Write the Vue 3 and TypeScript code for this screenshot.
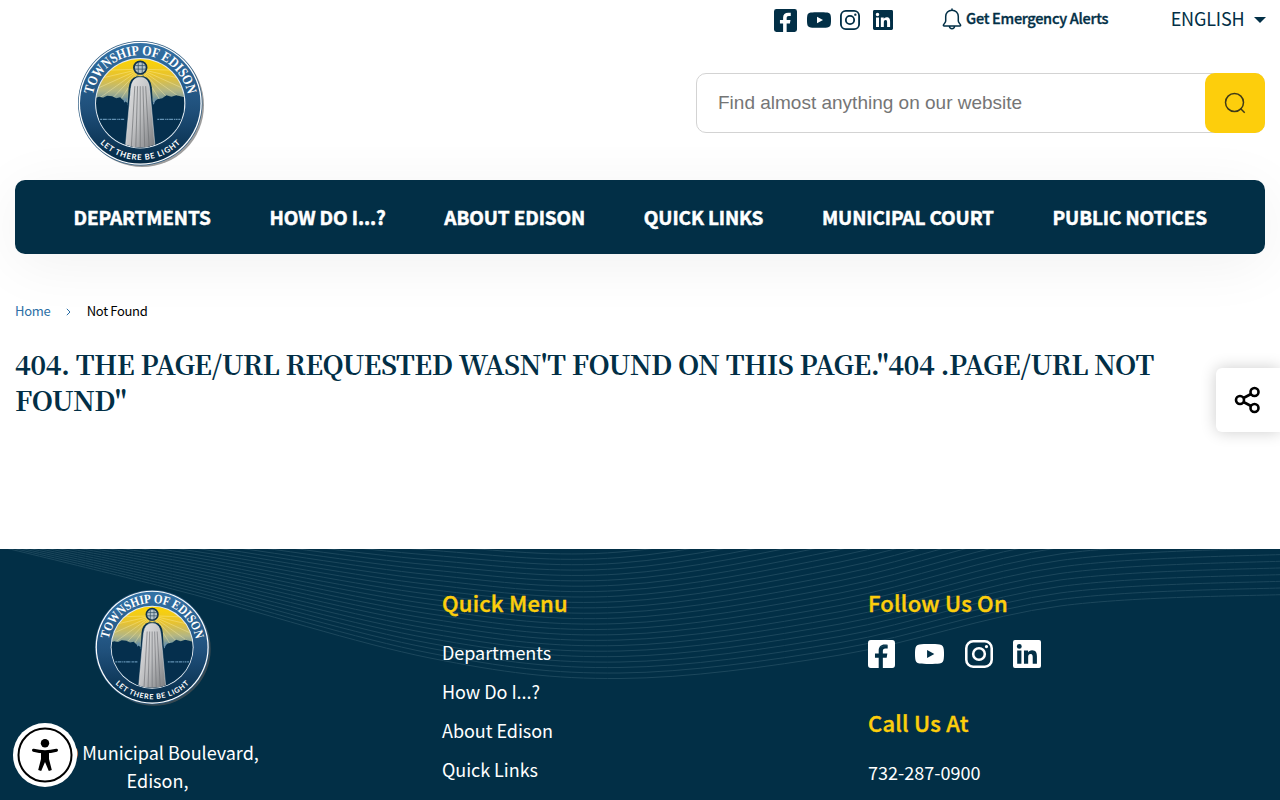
<script setup lang="ts">
const nav = ['DEPARTMENTS', 'HOW DO I...?', 'ABOUT EDISON', 'QUICK LINKS', 'MUNICIPAL COURT', 'PUBLIC NOTICES']
const quick = ['Departments', 'How Do I...?', 'About Edison', 'Quick Links']

const icons = [
  { name: 'facebook', d: 'M2.500 0h19a2.500 2.500 0 0 1 2.500 2.500v19a2.500 2.500 0 0 1-2.500 2.500h-8.300v-8.800h3.400l.6-3.600h-4V9.400c0-1.300.6-2.200 2.200-2.200h2.100V4c-.8-.1-1.800-.2-2.700-.2-3.300 0-5.300 1.900-5.300 5.200v2.600H6.200v3.600h3.300V24H2.500A2.500 2.500 0 0 1 0 21.500v-19A2.500 2.500 0 0 1 2.500 0z' },
  { name: 'youtube', d: 'M12 3.500c-3 0-6.500.1-8.300.4C1.300 4.300.4 5.800.2 8c-.3 2.600-.3 5.400 0 8 .2 2.200 1.100 3.700 3.500 4.100 3.600.5 13 .5 16.600 0 2.400-.4 3.300-1.900 3.500-4.100.3-2.600.3-5.400 0-8-.2-2.200-1.100-3.700-3.500-4.100-1.800-.3-5.300-.4-8.300-.4zM10 8.500l6 3.500-6 3.500z' },
  { name: 'instagram', d: 'M7 0h10a7 7 0 0 1 7 7v10a7 7 0 0 1-7 7H7a7 7 0 0 1-7-7V7a7 7 0 0 1 7-7zm0 2.200A4.800 4.800 0 0 0 2.200 7v10A4.800 4.800 0 0 0 7 21.800h10a4.800 4.800 0 0 0 4.800-4.800V7A4.800 4.800 0 0 0 17 2.200zM12 5.900a6.100 6.100 0 1 1 0 12.200 6.100 6.100 0 0 1 0-12.200zm0 2.200a3.900 3.900 0 1 0 0 7.800 3.900 3.900 0 0 0 0-7.800zM18.400 4.200a1.400 1.400 0 1 1 0 2.800 1.400 1.400 0 0 1 0-2.800z' },
  { name: 'linkedin', d: 'M1.700 0h20.600A1.700 1.700 0 0 1 24 1.700v20.600a1.700 1.700 0 0 1-1.700 1.700H1.700A1.700 1.700 0 0 1 0 22.300V1.700A1.700 1.700 0 0 1 1.700 0zM3.600 9.100v11.300h3.600V9.100zM5.400 3.400a2.100 2.100 0 1 0 0 4.200 2.100 2.100 0 0 0 0-4.200zM9.400 9.100v11.300H13v-5.600c0-1.500.3-2.900 2.100-2.900s1.800 1.700 1.800 3v5.500h3.600v-6.200c0-3-.7-5.400-4.200-5.400-1.700 0-2.800.9-3.300 1.800h-.1V9.100z' },
]

// Contour lines fan out from the left edge; each row is [x, y of lowest line, line spacing]
const knots = [[-40, 537, 1.2], [180, 591, 3], [430, 658, 4.900], [620, 678.500, 5.500], [840, 655, 6.200], [1060, 606, 6.500], [1300, 594, 6.700]]
const waves = Array.from({ length: 27 }, (_, i) => {
  const p = knots.map(([x, y, s]) => [x, y - i * s])
  let d = `M${p[0][0]} ${p[0][1]}`
  for (let k = 0; k < p.length - 1; k++) {
    const a = p[Math.max(k - 1, 0)], b = p[k], c = p[k + 1], e = p[Math.min(k + 2, p.length - 1)]
    d += `C${b[0] + (c[0] - a[0]) / 6} ${b[1] + (c[1] - a[1]) / 6} ${c[0] - (e[0] - b[0]) / 6} ${c[1] - (e[1] - b[1]) / 6} ${c[0]} ${c[1]}`
  }
  return d
})

const rays = Array.from({ length: 17 }, (_, i) => {
  const a = (i * 11.25 * Math.PI) / 180
  return { x: 62 - 60 * Math.cos(a), y: 30 + 60 * Math.sin(a) }
})
const folds = [-9, -4.5, 0, 4.5, 9]
</script>

<template>
  <svg class="defs" width="0" height="0">
    <defs>
      <linearGradient id="ring" x1="0" y1="0" x2="0" y2="1">
        <stop offset="0" stop-color="#3372a6" /><stop offset=".55" stop-color="#1f4f7a" /><stop offset="1" stop-color="#042a45" />
      </linearGradient>
      <linearGradient id="sky" x1="0" y1="0" x2="0" y2="1">
        <stop offset="0" stop-color="#fdd400" /><stop offset=".2" stop-color="#e6c233" /><stop offset=".36" stop-color="#b3b685" /><stop offset=".5" stop-color="#5c8aa8" />
      </linearGradient>
      <linearGradient id="robe" x1="0" y1="0" x2="1" y2="1">
        <stop offset="0" stop-color="#e6e6e7" /><stop offset=".5" stop-color="#c0c1c3" /><stop offset="1" stop-color="#77797c" />
      </linearGradient>
      <clipPath id="disc"><circle cx="62" cy="62" r="44" /></clipPath>
      <path id="arc-full" d="M62 110A48 48 0 1 1 62.100 110" />
      <path id="arc-low" d="M5.500 62a56.500 56.500 0 0 0 113 0" />
      <symbol id="seal" viewBox="0 0 128 128">
        <circle cx="64" cy="64" r="61.500" fill="#5b5b5b" opacity=".6" />
        <circle cx="62" cy="62" r="62" fill="#2b5a80" />
        <circle cx="62" cy="62" r="61.300" fill="#fff" />
        <circle cx="62" cy="62" r="60" fill="url(#ring)" />
        <circle cx="62" cy="62" r="45" fill="#e6edf2" />
        <g clip-path="url(#disc)">
          <rect x="18" y="18" width="88" height="88" fill="url(#sky)" />
          <path v-for="(r, i) in rays" :key="i" :d="`M62 28L${r.x} ${r.y}`" stroke="#fff0a8" stroke-width=".8" opacity=".5" />
          <path d="M16 57l5-1.500 4 1 4-2 5 .5 4 2 4-1 3 3 5 3h24l5-4 5-1 4-3 5 1.500 5-1.500 8 2v60H16z" fill="#052f4d" />
          <path d="M50 64l0-6M46 61l2-4M75 63l2-6M72 61v-5" stroke="#6d94b0" stroke-width="1.200" />
          <path d="M46 120L50.500 46q1-9 8-11h7q7 2 8 11l5 74z" fill="#052f4d" />
          <path d="M47 108L52.500 48q1-12 9.500-12t9.500 12l5.500 60z" fill="url(#robe)" stroke="#ececec" stroke-width=".5" />
          <path v-for="f in folds" :key="f" :d="`M${62 + f * 0.6} 45L${62 + f} 108`" stroke="#707276" stroke-width=".7" />
        </g>
        <circle cx="62" cy="26.500" r="6.300" fill="#b6c4c9" stroke="#12324a" stroke-width="1.800" />
        <path d="M56.500 24.500h11M56 28h12M60 21v11M64 21v11M58.500 34q3.500-2 7 0" stroke="#38566b" stroke-width=".8" fill="none" />
        <path d="M22 78h24M79 78h23" stroke="#6392b4" stroke-width="1.200" stroke-dasharray="2 .7 4 .8 1 .6" />
        <text class="seal-top"><textPath href="#arc-full" startOffset="50%" text-anchor="middle" textLength="133" lengthAdjust="spacingAndGlyphs">TOWNSHIP OF EDISON</textPath></text>
        <text class="seal-low"><textPath href="#arc-low" startOffset="50%" text-anchor="middle" textLength="89">LET THERE BE LIGHT</textPath></text>
      </symbol>
    </defs>
  </svg>

  <div class="page">
    <header class="header">
      <div class="brand"><svg class="seal" viewBox="0 0 128 128"><use href="#seal" /></svg></div>
      <div class="tools">
        <div class="topbar">
          <div class="social">
            <svg v-for="ic in icons" :key="ic.name" :class="ic.name" viewBox="0 0 24 24" preserveAspectRatio="none"><path fill-rule="evenodd" :d="ic.d" /></svg>
          </div>
          <a class="alerts">
            <svg viewBox="0 0 20 22" fill="none" stroke="#022f46" stroke-width="1.500" stroke-linecap="round" stroke-linejoin="round">
              <path d="M10 2.200V1M3.700 13V8.600C3.700 5 6.300 2.200 10 2.200s6.300 2.800 6.300 6.400V13c0 1.300 1 2 2.200 3.800.3.600 0 1.100-.6 1.100H2.100c-.6 0-.9-.5-.6-1.100C2.700 15 3.700 14.300 3.700 13zM7.300 18c.2 1.600 1.200 2.700 2.700 2.700s2.500-1.100 2.700-2.700" />
            </svg>
            <span>Get Emergency Alerts</span>
          </a>
          <a class="lang"><span>ENGLISH</span><i /></a>
        </div>
        <div class="search">
          <span>Find almost anything on our website</span>
          <button aria-label="Search"><svg viewBox="0 0 22 22" fill="none" stroke="#3f3a18" stroke-width="1.500"><circle cx="10.500" cy="10.500" r="9" /><path d="M16.500 16.500l4.200 4.200" /></svg></button>
        </div>
      </div>
    </header>

    <nav class="nav"><a v-for="n in nav" :key="n">{{ n }}</a></nav>

    <main class="main">
      <div class="crumbs">
        <a>Home</a>
        <svg viewBox="0 0 5 8" fill="none" stroke="#2b6ea5"><path d="M.8.8L4 4 .8 7.200" /></svg>
        <span>Not Found</span>
      </div>
      <h1>404. THE PAGE/URL REQUESTED WASN'T FOUND ON THIS PAGE."404 .PAGE/URL NOT FOUND"</h1>
    </main>

    <footer class="footer">
      <svg class="waves" viewBox="0 549 1280 251"><path v-for="(d, i) in waves" :key="i" :d="d" /></svg>
      <div class="col about">
        <svg class="seal" viewBox="0 0 128 128"><use href="#seal" /></svg>
        <p><span class="street">100 Municipal Boulevard,</span><span>Edison,</span></p>
      </div>
      <div class="col menu">
        <h2>Quick Menu</h2>
        <a v-for="q in quick" :key="q">{{ q }}</a>
      </div>
      <div class="col follow">
        <h2>Follow Us On</h2>
        <div class="social">
          <svg v-for="ic in icons" :key="ic.name" :class="ic.name" viewBox="0 0 24 24" preserveAspectRatio="none"><path fill-rule="evenodd" :d="ic.d" /></svg>
        </div>
        <h2 class="call">Call Us At</h2>
        <a>732-287-0900</a>
      </div>
    </footer>

    <button class="share" aria-label="Share">
      <svg viewBox="0 0 28 28" fill="none" stroke="#000" stroke-width="2.600"><circle cx="6" cy="14" r="4" /><circle cx="20.500" cy="6" r="4" /><circle cx="20.500" cy="22" r="4" /><path d="M9.500 12L17 8M9.500 16l7.500 4" /></svg>
    </button>
    <button class="access" aria-label="Accessibility">
      <svg viewBox="0 0 64 64"><circle cx="32" cy="32" r="32" fill="#fff" /><circle cx="32" cy="32" r="26.500" fill="none" stroke="#000" stroke-width="2" /><circle cx="32" cy="20.300" r="4.200" /><path d="M20.500 27.200q11.500 3 23 0" fill="none" stroke="#000" stroke-width="3" stroke-linecap="round" /><path d="M28 28h8v8l2.800 11-3 1L32 39l-3.800 9-3-1L28 36z" /></svg>
    </button>
  </div>
</template>

<style>
html, body { overflow: hidden; background: #fff; }
</style>

<style scoped>
.defs { position: absolute; }
.page { position: relative; width: 1280px; height: 800px; overflow: hidden; background: #fff; color: #022f46; font-family: "Noto Sans CJK SC", "Noto Sans", sans-serif; box-sizing: border-box; }
.page * { box-sizing: border-box; }
button { border: 0; padding: 0; display: flex; align-items: center; justify-content: center; }
.header { height: 180px; display: flex; justify-content: space-between; padding: 0 15px; }
.brand { padding: 41px 0 0 62.500px; }
.brand .seal { width: 128.500px; height: 128.500px; }
.seal { display: block; }
.seal-top { font: bold 14px "Liberation Serif", serif; fill: #fff; }
.seal-low { font: bold 7.800px Lato, sans-serif; fill: #fff; }
.tools { width: 569px; }
.topbar { height: 40px; display: flex; align-items: center; padding-left: 78px; }
.social { display: flex; align-items: center; fill: #022f46; }
.social svg { display: block; }
.topbar .facebook { width: 23px; height: 23px; }
.topbar .youtube { width: 24px; height: 22px; margin-left: 10px; }
.topbar .instagram { width: 20px; height: 20px; margin-left: 9px; }
.topbar .linkedin { width: 20px; height: 20px; margin-left: 13px; }
.alerts { display: flex; align-items: center; margin-left: 49px; font-size: 14.500px; font-weight: 500; letter-spacing: -.28px; line-height: 20px; white-space: nowrap; -webkit-text-stroke: .35px currentColor; }
.alerts svg { width: 20px; height: 22px; margin-right: 4px; margin-top: -2px; }
.alerts span { margin-top: -4px; width: 143px; }
.lang { display: flex; align-items: center; margin-left: auto; font-size: 18px; letter-spacing: -.15px; line-height: 24px; }
.lang span { margin-top: -4px; }
.lang i { border: 6px solid transparent; border-top: 6px solid #022f46; border-bottom: 0; margin-left: 9px; margin-top: -1px; margin-right: -.5px; }
.search { margin-top: 33px; height: 60px; border: 1px solid #d3d3d3; border-radius: 10px; display: flex; align-items: center; justify-content: space-between; padding-left: 21px; font: 19px "Liberation Sans", Arial, sans-serif; color: #757575; }
.search button { width: 60px; height: 60px; margin-right: -1px; border-radius: 10px; background: #fdce0c; }
.search svg { width: 22px; height: 22px; }
.nav { height: 74px; margin: 0 15px; background: #022f46; border-radius: 10px; box-shadow: 0 10px 60px rgba(0, 0, 0, .06); display: flex; align-items: center; justify-content: space-between; padding: 0 58px 1px 58.500px; color: #fff; font-size: 19px; font-weight: 700; letter-spacing: -.13px; line-height: 30px; white-space: nowrap; -webkit-text-stroke: .5px currentColor; }
.main { height: 295px; padding: 47px 15px 0; }
.crumbs { display: flex; align-items: center; font-size: 13px; letter-spacing: -.33px; line-height: 20px; color: #000; }
.crumbs a { color: #2b6ea5; }
.crumbs svg { width: 5px; height: 8px; margin: 2px 15.500px 0 16px; }
h1 { margin: 25px 0 0; font: 27px/36px "Noto Serif CJK SC", "Liberation Serif", serif; font-weight: 700; letter-spacing: -.55px; }
.footer { position: relative; height: 251px; background: #022f46; color: #fff; display: grid; grid-template-columns: 412px 426px 1fr; padding-left: 15px; font-size: 18px; }
.waves { position: absolute; inset: 0; width: 1280px; height: 251px; fill: none; stroke: #1c475c; stroke-width: 1; }
.col { position: relative; padding-left: 15px; display: flex; flex-direction: column; align-items: flex-start; }
.about { padding: 41px 0 0 0; }
.about .seal { width: 118px; height: 118px; margin-left: 80px; }
.about p { width: 285px; margin: 30px 0 0; display: flex; flex-direction: column; align-items: center; line-height: 28px; white-space: nowrap; }
.street { padding-right: 8px; }
h2 { margin: 0; color: #fdce0c; font-size: 22px; font-weight: 500; letter-spacing: .23px; line-height: 30px; -webkit-text-stroke: .4px currentColor; }
.menu h2, .follow h2 { margin-top: 38px; }
.menu h2 { margin-bottom: 16px; }
.menu a { line-height: 39px; letter-spacing: -.05px; }
.follow .social { margin-top: 23px; fill: #fff; }
.follow .facebook { width: 27px; height: 28px; }
.follow .youtube { width: 29px; height: 28px; margin-left: 20px; }
.follow .instagram { width: 28px; height: 28px; margin-left: 21px; }
.follow .linkedin { width: 28px; height: 28px; margin-left: 20px; }
.follow h2.call { margin-top: 39px; }
.follow a { margin-top: 17px; line-height: 36px; }
.share { position: absolute; left: 1216px; top: 368px; width: 64px; height: 64px; background: #fff; border-radius: 6px 0 0 6px; box-shadow: 0 0 16px rgba(0, 0, 0, .2); }
.share svg { width: 28px; height: 28px; }
.access { position: absolute; left: 13px; top: 723px; width: 64px; height: 64px; background: none; }
.access svg { width: 64px; height: 64px; display: block; }
</style>
